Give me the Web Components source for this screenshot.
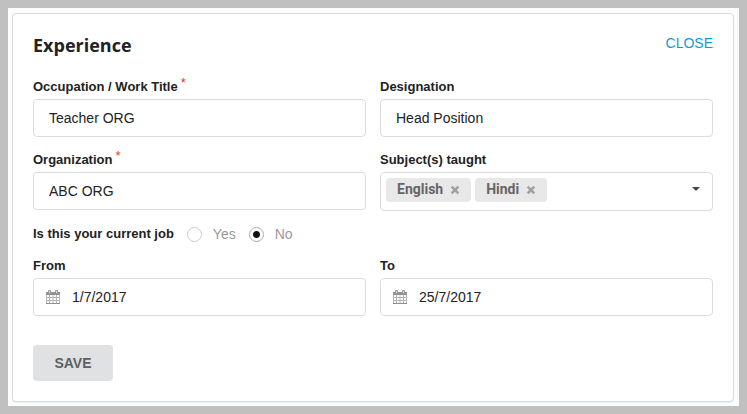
<!DOCTYPE html>
<html lang="en">
<head>
<meta charset="utf-8">
<meta name="viewport" content="width=device-width, initial-scale=1">
<title>Experience</title>
<style>
  * { box-sizing: border-box; }
  body {
    margin: 0;
    min-height: 100vh;
    border: 8px solid #c0c0c0;
    background: #fcfcfc;
    color: #222;
    font: 14px/20px "Liberation Sans", Arial, sans-serif;
    --line: #dcdcde;
    --label-size: 13px;
  }
</style>
</head>
<body>
<form-card heading="Experience">
  <a-close slot="action"></a-close>
  <form-grid>
    <text-field label="Occupation / Work Title" name="title" value="Teacher ORG" required></text-field>
    <text-field label="Designation" name="designation" value="Head Position"></text-field>
    <text-field label="Organization" name="organization" value="ABC ORG" required></text-field>
    <tag-field label="Subject(s) taught">
      <tag-chip>English</tag-chip>
      <tag-chip>Hindi</tag-chip>
    </tag-field>
    <radio-field label="Is this your current job" name="current" options="Yes,No" value="No"></radio-field>
    <text-field label="From" name="from" value="1/7/2017" icon="calendar"></text-field>
    <text-field label="To" name="to" value="25/7/2017" icon="calendar"></text-field>
  </form-grid>
  <save-button slot="footer">SAVE</save-button>
</form-card>

<script>
  const base = '*{box-sizing:border-box}';
  const render = (el, css, html) => {
    el.attachShadow({ mode: 'open' }).innerHTML = `<style>${base}${css}</style>${html}`;
  };
  const labelCss = `
    .label { display: block; font-size: var(--label-size); font-weight: 700; line-height: 20px; }
    .req { color: #dd3b2a; font-weight: 400; font-size: 13px; line-height: 0; vertical-align: 4px; margin-left: 3px; }`;
  const calendar = `
    <svg class="icon" width="14" height="14" viewBox="0 0 14 14" aria-hidden="true">
      <path fill="#909090" d="M0 2h14v3H0z"/>
      <rect x="2" y="0" width="3" height="4" rx="1" fill="#999"/>
      <rect x="9" y="0" width="3" height="4" rx="1" fill="#999"/>
      <path stroke="#ddd" d="M3.500 1v2M10.500 1v2"/>
      <path fill="none" stroke="#b4b4b4" d="M.5 5v8.500h13V5M.5 7.500h13M.5 10.500h13M3.500 5v8.500M7 5v8.500M10.500 5v8.500"/>
      <path stroke="#909090" d="M0 13.500h14"/>
    </svg>`;

  customElements.define('form-card', class extends HTMLElement {
    constructor() {
      super();
      render(this, `
        :host { display: block; margin: 5px 5px 4px 4px; padding: 20px; border: 1px solid #d8dcde;
          border-radius: 4px; background: #fff; box-shadow: 0 1px 1px #edf1f3; }
        header { display: flex; justify-content: space-between; align-items: flex-start; margin-bottom: 21px; }
        h2 { margin: 0; font: 700 18px/22px "Open Sans", "Noto Sans", sans-serif; }
        footer { margin-top: 29px; }`,
        `<header><h2>${this.getAttribute('heading')}</h2><slot name="action"></slot></header>
         <slot></slot><footer><slot name="footer"></slot></footer>`);
    }
  });

  customElements.define('a-close', class extends HTMLElement {
    constructor() {
      super();
      render(this, `:host { display: block; line-height: 18px; } a { color: #0e9bdc; text-decoration: none; }`,
        `<a href="#close">CLOSE</a>`);
    }
  });

  customElements.define('form-grid', class extends HTMLElement {
    constructor() {
      super();
      render(this, `
        :host { display: grid; grid-template-columns: 1fr 1fr; gap: 13px 14px; align-items: start; }`,
        `<slot></slot>`);
    }
  });

  customElements.define('text-field', class extends HTMLElement {
    constructor() {
      super();
      const at = n => this.getAttribute(n);
      const icon = at('icon') ? calendar : '';
      render(this, `${labelCss}
        :host { display: block; min-width: 0; }
        .box { display: flex; align-items: center; gap: 12px; height: 38px; margin-top: 2px;
          padding: 0 ${icon ? 12 : 15}px; border: 1px solid var(--line); border-radius: 4px; background: #fff; }
        .box:focus-within { border-color: #0e9bdc; }
        .icon { flex: none; }
        input { flex: 1; min-width: 0; height: 100%; padding: 0; border: 0; outline: 0;
          background: none; color: inherit; font: inherit; }`,
        `<label class="label" for="f">${at('label')}${this.hasAttribute('required') ? '<span class="req">*</span>' : ''}</label>
         <div class="box">${icon}<input id="f" type="text" name="${at('name')}" value="${at('value')}"></div>`);
    }
  });

  customElements.define('tag-chip', class extends HTMLElement {
    constructor() {
      super();
      render(this, `
        :host { display: flex; align-items: center; gap: 7px; height: 24px; padding: 0 11px;
          border-radius: 4px; background: #e8e8e8; color: #666;
          font: 700 14px/22px Roboto, sans-serif; }
        span { height: 24px; }
        button { display: flex; padding: 0; border: 0; background: none; color: #a0a0a0; cursor: pointer; }`,
        `<span><slot></slot></span>
         <button type="button" aria-label="Remove"><svg width="10" height="10" viewBox="0 0 10 10">
           <path d="M1.700 1.700l6.600 6.600M8.300 1.700l-6.600 6.600" stroke="currentColor" stroke-width="2.600"/></svg></button>`);
      this.shadowRoot.querySelector('button').onclick = () => this.remove();
    }
  });

  customElements.define('tag-field', class extends HTMLElement {
    constructor() {
      super();
      render(this, `${labelCss}
        :host { display: block; min-width: 0; }
        .box { display: flex; align-items: flex-start; min-height: 39px; margin-top: 2px; padding: 5px;
          border: 1px solid var(--line); border-radius: 4px; background: #fff; }
        .tags { display: flex; flex-wrap: wrap; gap: 4px; flex: 1; }
        button { display: flex; align-items: center; justify-content: center; width: 22px; height: 22px;
          padding: 0; border: 0; background: none; cursor: pointer; }`,
        `<span class="label" id="l">${this.getAttribute('label')}</span>
         <div class="box" role="group" aria-labelledby="l">
           <div class="tags"><slot></slot></div>
           <button type="button" aria-haspopup="listbox" aria-labelledby="l">
             <svg width="8" height="4" viewBox="0 0 8 4"><path d="M0 0h8L4 4z" fill="#444"/></svg></button>
         </div>`);
    }
  });

  customElements.define('radio-field', class extends HTMLElement {
    constructor() {
      super();
      const name = this.getAttribute('name'), value = this.getAttribute('value');
      render(this, `
        :host { display: block; grid-column: 1 / -1; }
        fieldset { display: flex; align-items: center; height: 19px; margin: 0; padding: 1px 0 0; border: 0; }
        .title { font-size: var(--label-size); font-weight: 700; }
        label { display: flex; align-items: center; gap: 11px; margin-left: 13px; color: #999; }
        input { appearance: none; width: 15px; height: 15px; margin: 0; border: 1px solid #ccc; border-radius: 50%; background: #fff; }
        input:checked { border-color: #aaa; background: radial-gradient(circle, #111 3px, #fff 4px); }`,
        `<fieldset aria-labelledby="t"><span class="title" id="t">${this.getAttribute('label')}</span>
         ${this.getAttribute('options').split(',').map(o =>
           `<label><input type="radio" name="${name}" value="${o}"${o === value ? ' checked' : ''}>${o}</label>`).join('')}
         </fieldset>`);
    }
  });

  customElements.define('save-button', class extends HTMLElement {
    constructor() {
      super();
      render(this, `
        :host { display: block; }
        button { display: block; min-width: 80px; height: 36px; padding: 0 20px; border: 0; border-radius: 4px;
          background: #e0e1e2; color: #5f6061; font: 700 14px/20px "Liberation Sans", Arial, sans-serif; cursor: pointer; }`,
        `<button type="button"><slot></slot></button>`);
    }
  });
</script>
</body>
</html>
